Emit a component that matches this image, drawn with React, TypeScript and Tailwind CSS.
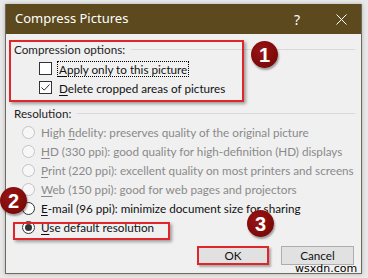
import React from 'react';

function Key({ children }: { children: React.ReactNode }) {
    return <span className="underline underline-offset-[2px] decoration-1">{children}</span>;
}

function Badge({ n, className }: { n: string; className: string }) {
    return (
        <div
            className={`absolute w-[27px] h-[27px] rounded-full bg-[radial-gradient(circle_at_40%_35%,#9a1414,#6e0606)] shadow-[1px_2px_2px_rgba(0,0,0,0.35)] flex items-center justify-center text-white text-[20px] font-bold font-['Liberation_Sans',sans-serif] leading-none ${className}`}
        >
            {n}
        </div>
    );
}

function GroupHeader({ label }: { label: string }) {
    return (
        <div className="flex items-center h-[19px] pl-[8px] pr-[6px] gap-[6px]">
            <span className="text-[#1e1e1e]">{label}</span>
            <div className="flex-1 h-px bg-[#d9d9d9]" />
        </div>
    );
}

function CheckRow({ checked, focus, children }: { checked?: boolean; focus?: boolean; children: React.ReactNode }) {
    return (
        <div className="flex items-center h-[19px] pl-[33px] gap-[6px]">
            <div className="w-[13px] h-[13px] border border-[#333] bg-white flex items-center justify-center">
                {checked && (
                    <svg width="11" height="11" viewBox="0 0 11 11">
                        <path d="M1.5 5.5 L4.2 8.2 L9.5 2.5" fill="none" stroke="#333" strokeWidth="1" />
                    </svg>
                )}
            </div>
            <span className={`px-[1px] leading-[14px] ${focus ? 'outline outline-1 outline-dotted outline-black' : ''}`}>{children}</span>
        </div>
    );
}

function RadioRow({ selected, disabled, children }: { selected?: boolean; disabled?: boolean; children: React.ReactNode }) {
    return (
        <div className={`flex items-center h-[19px] pl-[16px] gap-[6px] ${disabled ? 'text-[#8a8a8a]' : 'text-[#111]'}`}>
            <div
                className={`w-[13px] h-[13px] rounded-full border flex items-center justify-center ${disabled ? 'border-[#c4c4c4] bg-[#f7f7f7]' : 'border-[#333] bg-white'}`}
            >
                {selected && <div className="w-[7px] h-[7px] rounded-full bg-[#333]" />}
            </div>
            <span>{children}</span>
        </div>
    );
}

export default function App() {
    return (
        <div className="relative w-[368px] h-[278px] overflow-hidden bg-[#e9e9e9] pt-[4px] pl-[5px] font-['Lato',sans-serif] text-[11.7px] whitespace-nowrap">
            <div className="w-[357px] h-[270px] flex flex-col border border-t-0 border-[#6d6a60] shadow-[0_0_4px_rgba(0,0,0,0.25)]">
                {/* Title bar */}
                <div className="h-[30px] bg-[#5c4a1e] flex items-center pl-[9px] pr-[14px] text-white">
                    <span className="text-[13px] flex-1 font-['Noto_Sans',sans-serif]">Compress Pictures</span>
                    <span className="text-[14px] mr-[36px] font-['Noto_Sans',sans-serif]">?</span>
                    <svg width="11" height="11" viewBox="0 0 11 11">
                        <path d="M0.5 0.5 L10.5 10.5 M10.5 0.5 L0.5 10.5" stroke="white" strokeWidth="1" />
                    </svg>
                </div>

                {/* Body */}
                <div className="flex-1 bg-[#f0f0f0] flex flex-col pt-[6px] text-[#111]">
                    <GroupHeader label="Compression options:" />
                    <CheckRow focus>
                        <Key>A</Key>pply only to this picture
                    </CheckRow>
                    <CheckRow checked>
                        <Key>D</Key>elete cropped areas of pictures
                    </CheckRow>

                    <div className="mt-[7px]">
                        <GroupHeader label="Resolution:" />
                    </div>
                    <RadioRow disabled>
                        High <Key>f</Key>idelity: preserves quality of the original picture
                    </RadioRow>
                    <RadioRow disabled>
                        <Key>H</Key>D (330 ppi): good quality for high-definition (HD) displays
                    </RadioRow>
                    <RadioRow disabled>
                        <Key>P</Key>rint (220 ppi): excellent quality on most printers and screens
                    </RadioRow>
                    <RadioRow disabled>
                        <Key>W</Key>eb (150 ppi): good for web pages and projectors
                    </RadioRow>
                    <RadioRow>
                        <Key>E</Key>-mail (96 ppi): minimize document size for sharing
                    </RadioRow>
                    <RadioRow selected>
                        <Key>U</Key>se default resolution
                    </RadioRow>

                    <div className="flex justify-end gap-[12px] pr-[7px] mt-[9px]">
                        <button className="w-[72px] h-[19px] bg-[#e1e1e1] border-2 border-[#e0262b] shadow-[2px_2px_2px_rgba(0,0,0,0.3)] flex items-center justify-center">
                            OK
                        </button>
                        <button className="w-[73px] h-[19px] bg-[#e1e1e1] border border-[#adadad] flex items-center justify-center">
                            Cancel
                        </button>
                    </div>
                </div>
            </div>

            {/* Annotations */}
            <div className="absolute left-[9px] top-[40px] w-[235px] h-[62px] border-2 border-[#e0262b] shadow-[2px_2px_3px_rgba(0,0,0,0.35)]" />
            <div className="absolute left-[13px] top-[222px] w-[157px] h-[18px] border-2 border-[#e0262b] shadow-[2px_2px_3px_rgba(0,0,0,0.35)]" />
            <Badge n="1" className="left-[251px] top-[41px]" />
            <Badge n="2" className="left-[0px] top-[187px]" />
            <Badge n="3" className="left-[247px] top-[210px]" />

            <span className="absolute left-[295px] top-[262px] text-[11px] leading-[14px] text-black font-['DejaVu_Sans',sans-serif] [text-shadow:0_0_2px_white]">
                wsxdn.com
            </span>
        </div>
    );
}
